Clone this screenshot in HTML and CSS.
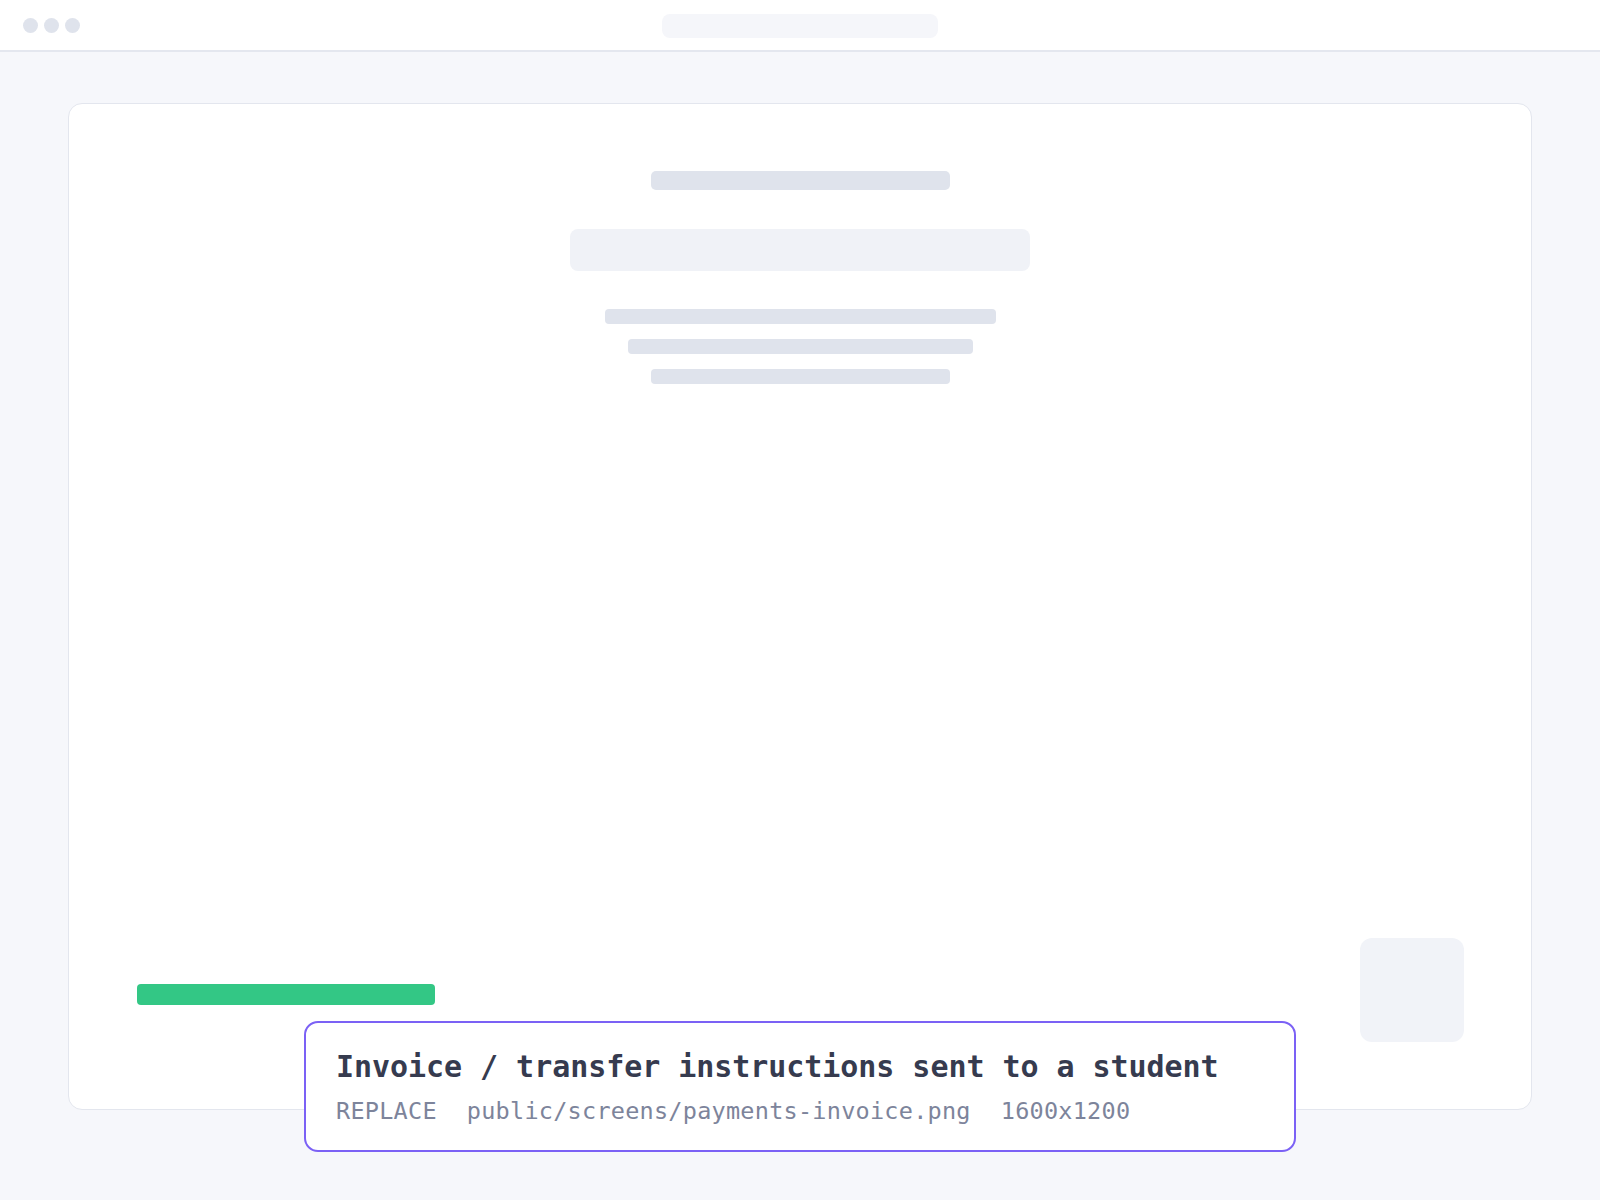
FILE: index.html
```html
<!DOCTYPE html>
<html lang="en">
<head>
    <meta charset="UTF-8">
    <meta name="viewport" content="width=device-width, initial-scale=1.0">
    <title>Payments - Invoice</title>
    <link rel="stylesheet" href="styles.css">
</head>
<body>
    <div class="topbar">
        <div class="dots">
            <span class="dot"></span>
            <span class="dot"></span>
            <span class="dot"></span>
        </div>
        <div class="address"></div>
        <div></div>
    </div>

    <div class="main">
        <div class="card">
            <div class="skeleton">
                <div class="line line-title"></div>
                <div class="block"></div>
                <div class="lines">
                    <div class="line w85"></div>
                    <div class="line w75"></div>
                    <div class="line w65"></div>
                </div>
            </div>
            <div class="card-footer">
                <div class="progress"></div>
                <div class="thumb"></div>
            </div>
        </div>
    </div>

    <div class="caption">
        <div class="caption-title">Invoice / transfer instructions sent to a student</div>
        <div class="caption-meta">
            <span>REPLACE</span>
            <span>public/screens/payments-invoice.png</span>
            <span>1600x1200</span>
        </div>
    </div>
</body>
</html>
```

FILE: styles.css
```css
body {
    margin: 0;
    background-color: #f6f7fb;
    font-family: 'DejaVu Sans Mono', 'Liberation Mono', monospace;
}
.topbar {
    display: grid;
    grid-template-columns: 1fr auto 1fr;
    align-items: center;
    height: 52px;
    box-sizing: border-box;
    padding: 0 23px;
    background-color: #ffffff;
    border-bottom: 2px solid #e4e7ef;
}
.dots {
    display: flex;
    gap: 6px;
    margin-top: 1px;
}
.dot {
    width: 15px;
    height: 15px;
    border-radius: 50%;
    background-color: #dfe3ec;
}
.address {
    width: 276px;
    height: 24px;
    border-radius: 8px;
    background-color: #f5f6fa;
    margin-top: 1px;
}
.main {
    display: flex;
    flex-direction: column;
    height: calc(100vh - 52px);
    box-sizing: border-box;
    padding: 51px 68px 90px;
}
.card {
    flex: 1;
    display: flex;
    flex-direction: column;
    justify-content: space-between;
    padding: 67px;
    background-color: #ffffff;
    border: 1px solid #e3e6ee;
    border-radius: 14px;
}
.skeleton {
    display: flex;
    flex-direction: column;
    align-items: center;
    width: 460px;
    margin: 0 auto;
}
.line {
    height: 15px;
    border-radius: 4px;
    background-color: #dfe3ec;
}
.line-title {
    width: 65%;
    height: 19px;
    border-radius: 5px;
    margin-bottom: 39px;
}
.block {
    width: 100%;
    height: 42px;
    border-radius: 8px;
    background-color: #f0f2f7;
    margin-bottom: 38px;
}
.lines {
    display: flex;
    flex-direction: column;
    align-items: center;
    gap: 15px;
    width: 100%;
}
.w85 {
    width: 85%;
}
.w75 {
    width: 75%;
}
.w65 {
    width: 65%;
}
.card-footer {
    display: flex;
    justify-content: space-between;
    align-items: flex-end;
}
.progress {
    width: 298px;
    height: 21px;
    margin-bottom: 37px;
    margin-left: 1px;
    border-radius: 4px;
    background-color: #33c785;
}
.thumb {
    width: 104px;
    height: 104px;
    border-radius: 12px;
    background-color: #f1f3f8;
}
.caption {
    position: fixed;
    left: 50%;
    bottom: 48px;
    transform: translateX(-50%);
    width: 992px;
    box-sizing: border-box;
    padding: 26px 28px 24px 30px;
    background-color: #ffffff;
    border: 2px solid #7b61f5;
    border-radius: 14px;
}
.caption-title {
    font-size: 30px;
    font-weight: bold;
    line-height: 36px;
    letter-spacing: -0.05px;
    color: #363b4f;
    white-space: nowrap;
}
.caption-meta {
    display: flex;
    gap: 30px;
    margin-top: 11px;
    font-size: 23.5px;
    line-height: 30px;
    letter-spacing: 0.25px;
    color: #7d849b;
    white-space: nowrap;
}
```
